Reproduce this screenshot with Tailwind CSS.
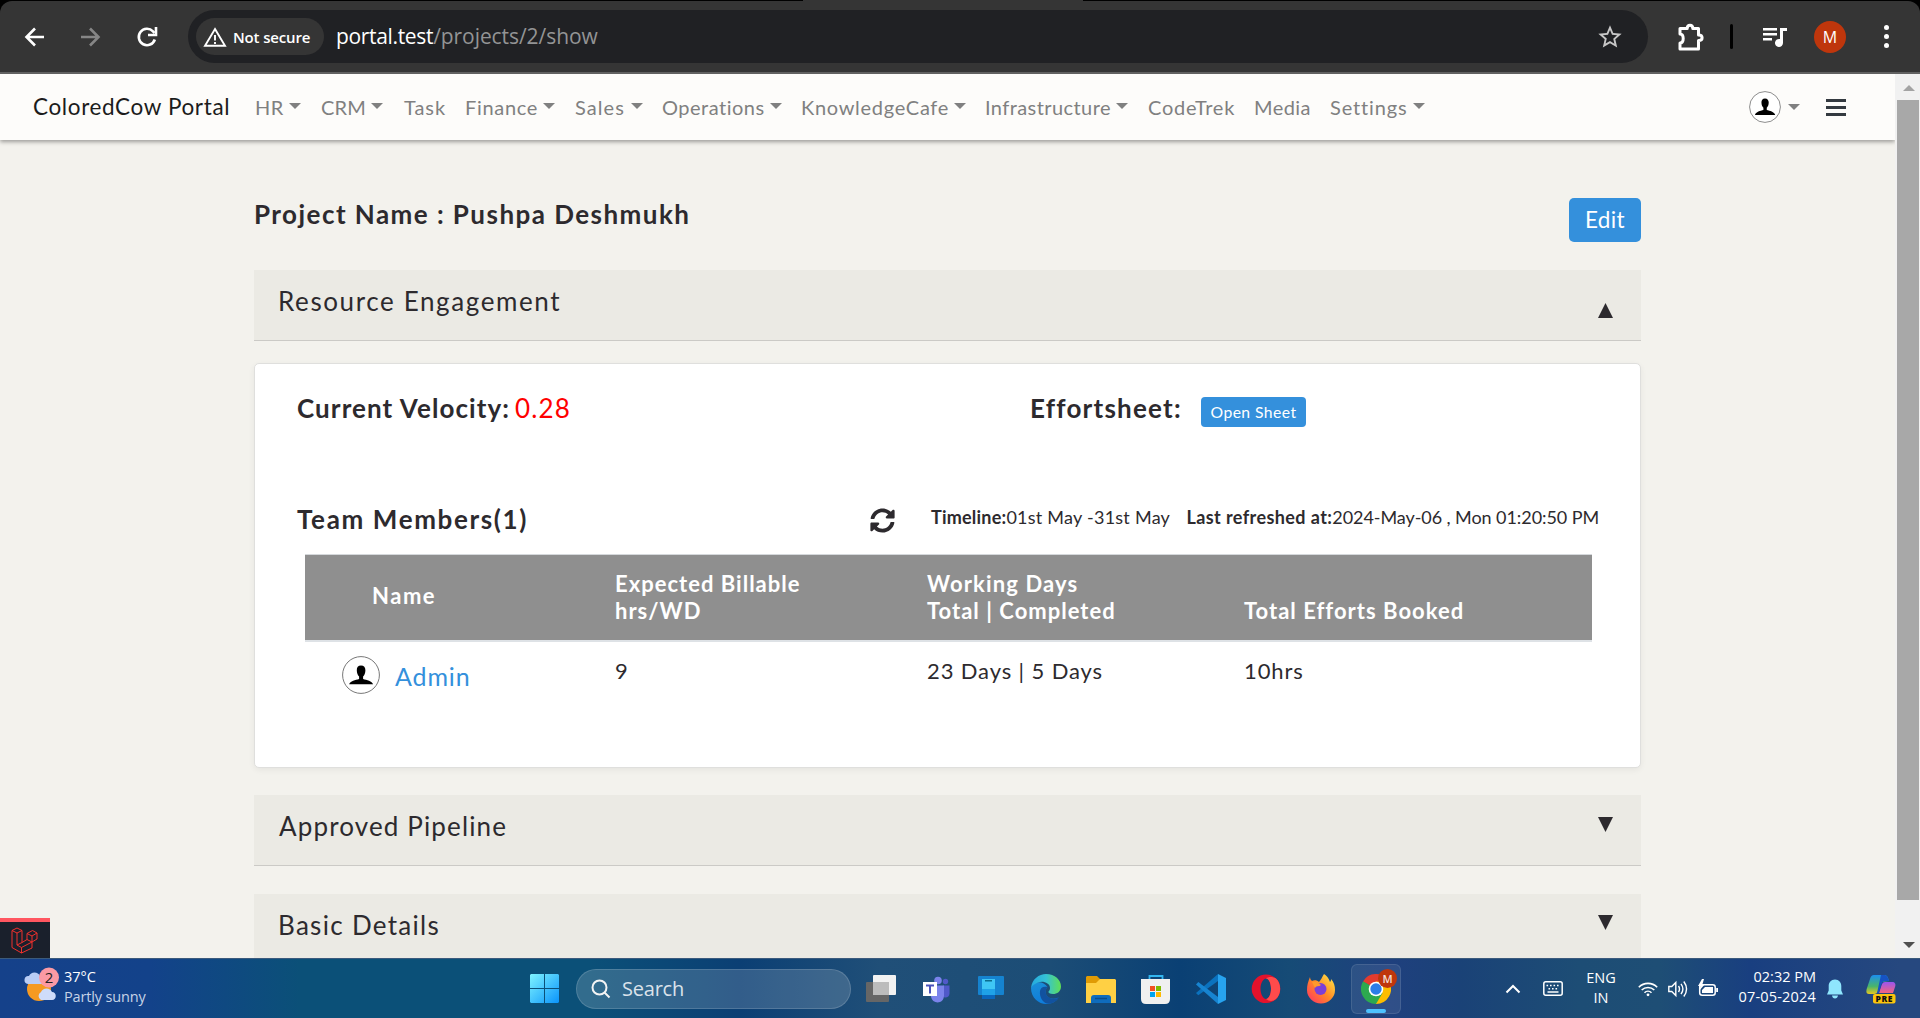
<!DOCTYPE html>
<html lang="en">
<head>
<meta charset="utf-8">
<title>ColoredCow Portal</title>
<script src="https://cdn.jsdelivr.net/npm/@tailwindcss/browser@4"></script>
</head>
<body class="w-[1920px] h-[1018px] overflow-hidden bg-black font-['Lato',sans-serif] text-[#2d2a2e]">
<div class="w-[1920px] h-[1018px] flex flex-col overflow-hidden relative">

<!-- Browser toolbar -->
<header class="h-[74px] shrink-0 flex flex-col font-['Open_Sans',sans-serif]">
  <div class="h-px flex justify-center pr-[34px] bg-black"><div class="w-[280px] bg-[#353535]"></div></div>
  <div class="h-[71px] bg-[#353535] rounded-t-[12px] flex items-center pl-[24px]">
    <svg class="w-[22px] h-[22px]" viewBox="0 0 22 22" fill="none" stroke="#fff" stroke-width="2.6"><path d="M20 11H3M11 2.5L2.5 11l8.500 8.500"/></svg>
    <svg class="ml-[34px] w-[22px] h-[22px]" viewBox="0 0 22 22" fill="none" stroke="#868686" stroke-width="2.600"><path d="M1 11h17M10 2.500l8.500 8.500-8.500 8.500"/></svg>
    <svg class="ml-[34px] w-[22px] h-[22px]" viewBox="0 0 22 22" fill="none" stroke="#fff" stroke-width="2.600"><path d="M18.800 13.500A8.200 8.200 0 1 1 17 5.400L18.500 7"/><path d="M20 1v8h-8" /></svg>
    <div class="ml-[30px] w-[1460px] h-[53px] rounded-full bg-[#202124] flex items-center pl-[8px]">
      <div class="w-[128px] h-[37px] rounded-full bg-[#353535] flex items-center pl-[7px] text-white">
        <svg class="w-[24px] h-[20px]" viewBox="0 0 24 20" fill="none" stroke="#fff" stroke-width="1.900"><path d="M12 2L22 18.800H2z"/><path d="M12 8v5.500M12 15v2"/></svg>
        <span class="ml-[6px] text-[15px] font-semibold leading-[20px] tracking-[-0.01em] whitespace-nowrap">Not secure</span>
      </div>
      <div class="ml-[12px] -mt-[2px] flex text-[21px] leading-[30px] whitespace-nowrap"><span class="text-white tracking-[-0.016em]">portal.test</span><span class="text-[#939495] tracking-[-0.003em]">/projects/2/show</span></div>
      <svg class="ml-auto mr-[24px] w-[28px] h-[28px]" viewBox="0 0 24 24" fill="#c7c7c7"><path d="M22 9.240l-7.190-.62L12 2 9.190 8.630 2 9.240l5.460 4.730L5.820 21 12 17.270 18.180 21l-1.630-7.030L22 9.240zM12 15.400l-3.760 2.270 1-4.280-3.320-2.880 4.380-.38L12 6.100l1.710 4.040 4.380.38-3.320 2.880 1 4.280L12 15.400z"/></svg>
    </div>
    <svg class="ml-[28px] w-[30px] h-[30px]" viewBox="0 0 30 30"><path d="M4 6.500h7.200c0-2 1-3.300 2.800-3.300s2.800 1.300 2.800 3.300h5.700v6.400c2.200 0 3.600 1 3.600 2.800s-1.400 2.800-3.600 2.800V27H4v-6c2 0 3.200-1.600 3.200-4.500S6 12 4 12z" fill="none" stroke="#fff" stroke-width="3" stroke-linejoin="round"/></svg>
    <div class="ml-[24px] w-[3px] h-[25px] rounded bg-black"></div>
    <svg class="ml-[29px] w-[26px] h-[22px]" viewBox="0 0 26 22" fill="#fff"><path d="M1 2h14v2.600H1zM1 7h14v2.600H1zM1 12h9v2.600H1zM18 2h7v3h-4v12a4 4 0 1 1-3-3.900z"/></svg>
    <div class="ml-[26px] w-[32px] h-[32px] rounded-full bg-[#bf360c] flex items-center justify-center text-white text-[16px]">M</div>
    <div class="ml-[38px] flex flex-col gap-[4px]"><i class="w-[5px] h-[5px] rounded-full bg-white"></i><i class="w-[5px] h-[5px] rounded-full bg-white"></i><i class="w-[5px] h-[5px] rounded-full bg-white"></i></div>
  </div>
  <div class="h-[2px] bg-[#616161]"></div>
</header>

<div class="h-[884px] shrink-0 flex overflow-hidden">
  <!-- Page -->
  <div class="w-[1895px] h-full bg-[#f3f2ed] flex flex-col overflow-hidden">
    <nav class="h-[66px] shrink-0 bg-[#fdfcfa] shadow-[0_2px_4px_rgba(0,0,0,0.35)] flex items-center whitespace-nowrap text-[20px] leading-[30px] text-[#808080]">
      <div class="pl-[33px] w-[255px] text-[22.500px] text-[#1c1c1c] tracking-[0.028em]">ColoredCow Portal</div>
      <div class="w-[66px] flex items-center"><span class="tracking-[0.03em]">HR</span><i class="ml-[5px] mb-[3px] border-x-6 border-x-transparent border-t-6 border-t-[#808080]"></i></div>
      <div class="w-[83px] flex items-center"><span class="tracking-[0.009em]">CRM</span><i class="ml-[5px] mb-[3px] border-x-6 border-x-transparent border-t-6 border-t-[#808080]"></i></div>
      <div class="w-[61px] tracking-[0.046em]">Task</div>
      <div class="w-[110px] flex items-center"><span class="tracking-[0.034em]">Finance</span><i class="ml-[5px] mb-[3px] border-x-6 border-x-transparent border-t-6 border-t-[#808080]"></i></div>
      <div class="w-[87px] flex items-center"><span class="tracking-[0.054em]">Sales</span><i class="ml-[6px] mb-[3px] border-x-6 border-x-transparent border-t-6 border-t-[#808080]"></i></div>
      <div class="w-[139px] flex items-center"><span class="tracking-[0.025em]">Operations</span><i class="ml-[5px] mb-[3px] border-x-6 border-x-transparent border-t-6 border-t-[#808080]"></i></div>
      <div class="w-[184px] flex items-center"><span class="tracking-[0.035em]">KnowledgeCafe</span><i class="ml-[5px] mb-[3px] border-x-6 border-x-transparent border-t-6 border-t-[#808080]"></i></div>
      <div class="w-[163px] flex items-center"><span class="tracking-[0.021em]">Infrastructure</span><i class="ml-[5px] mb-[3px] border-x-6 border-x-transparent border-t-6 border-t-[#808080]"></i></div>
      <div class="w-[106px] tracking-[0.037em]">CodeTrek</div>
      <div class="w-[76px] tracking-[0.022em]">Media</div>
      <div class="w-[100px] flex items-center"><span class="tracking-[0.043em]">Settings</span><i class="ml-[5px] mb-[3px] border-x-6 border-x-transparent border-t-6 border-t-[#808080]"></i></div>
      <svg class="ml-auto w-[32px] h-[32px]" viewBox="0 0 38 38"><circle cx="19" cy="19" r="18.300" fill="#fff" stroke="#777" stroke-width="1"/><path d="M19 9c-3 0-4.300 2-4.200 4.700 0 3 1 5 2.300 6.300v2.600c-3.500 1-9 2.200-10 5.800h24c-1-3.600-6.500-4.800-10-5.800V20c1.300-1.300 2.300-3.300 2.300-6.300C23.400 11 22 9 19 9z" fill="#000"/></svg>
      <i class="ml-[7px] border-x-6 border-x-transparent border-t-6 border-t-[#808080]"></i>
      <div class="ml-[26px] mr-[49px] flex flex-col gap-[4px]"><i class="w-[20px] h-[3px] bg-[#343a40]"></i><i class="w-[20px] h-[3px] bg-[#343a40]"></i><i class="w-[20px] h-[3px] bg-[#343a40]"></i></div>
    </nav>

    <main class="ml-[254px] w-[1387px] flex flex-col whitespace-nowrap">
      <div class="h-[130px] shrink-0 flex items-start justify-between pt-[58px]">
        <h4 class="text-[26px] leading-[32px] font-bold tracking-[0.056em]">Project Name : Pushpa Deshmukh</h4>
        <button class="w-[72px] h-[44px] rounded-[5px] bg-[#3490dc] text-white text-[22.500px] leading-[30px] tracking-[0.016em]">Edit</button>
      </div>

      <section class="h-[71px] shrink-0 bg-[#ebeae4] border-b border-[#cbcac6] flex items-start justify-between pl-[24px] pr-[28px]">
        <h5 class="pt-[15px] text-[26px] leading-[32px] tracking-[0.062em]">Resource Engagement</h5>
        <svg class="mt-[33px] w-[15px] h-[15px]" viewBox="0 0 15 15" fill="#2d2a2e"><path d="M7.500 0L15 15H0z"/></svg>
      </section>

      <section class="mt-[22px] h-[405px] shrink-0 bg-white border border-[#dfdfdd] rounded-[5px] shadow-[0_2px_6px_rgba(0,0,0,0.06)] flex flex-col">
        <div class="h-[139px] pt-[28px] pl-[42px] flex items-start text-[26px] leading-[32px]">
          <div class="w-[733px] flex"><b class="w-[218px] tracking-[0.042em]">Current Velocity:</b><span class="text-[#ff0000] tracking-[0.044em]">0.28</span></div>
          <b class="w-[171px] tracking-[0.047em]">Effortsheet:</b>
          <button class="mt-[5px] w-[105px] h-[30px] rounded-[4px] bg-[#3490dc] text-white text-[15.750px] leading-[24px] tracking-[0.026em]">Open Sheet</button>
        </div>
        <div class="h-[51px] pl-[42px] flex items-start">
          <h4 class="w-[573px] shrink-0 text-[26px] leading-[32px] font-bold tracking-[0.063em]">Team Members(1)</h4>
          <svg class="mt-[5px] w-[25px] h-[25px] shrink-0" viewBox="0 0 512 512" fill="#2d2a2e"><path d="M370.720 133.280C339.458 104.008 298.888 87.962 255.848 88c-77.458.068-144.328 53.178-162.791 126.850-1.344 5.363-6.122 9.150-11.651 9.150H24.103c-7.498 0-13.194-6.807-11.807-14.176C33.933 94.924 134.813 8 256 8c66.448 0 126.791 26.136 171.315 68.685L463.030 40.970C478.149 25.851 504 36.559 504 57.941V192c0 13.255-10.745 24-24 24H345.941c-21.382 0-32.090-25.851-16.971-40.971l41.750-41.749zM32 296h134.059c21.382 0 32.090 25.851 16.971 40.971l-41.750 41.750c31.262 29.273 71.835 45.319 114.876 45.280 77.418-.070 144.315-53.144 162.787-126.849 1.344-5.363 6.122-9.150 11.651-9.150h57.304c7.498 0 13.194 6.807 11.807 14.176C478.067 417.076 377.187 504 256 504c-66.448 0-126.791-26.136-171.315-68.685L48.970 471.030C33.851 486.149 8 475.441 8 454.059V320c0-13.255 10.745-24 24-24z"/></svg>
          <p class="ml-[36px] mt-[3px] flex shrink-0 text-[18px] leading-[22px]"><b class="tracking-[0.012em]">Timeline:</b><span class="w-[180px] tracking-[0.014em]">01st May -31st May</span><b class="tracking-[0.023em]">Last refreshed at:</b><span class="tracking-[-0.004em]">2024-May-06 , Mon 01:20:50 PM</span></p>
        </div>
        <div class="ml-[50px] w-[1287px] h-[88px] bg-[#8f8f8f] border-t border-b-2 border-t-[#d5d8db] border-b-[#dee2e6] pt-[15px] grid grid-cols-[310px_312px_317px_348px] text-white font-bold text-[22px] leading-[27px] tracking-[0.046em]">
          <div class="pl-[67px] pt-[12px] tracking-[0.07em]">Name</div>
          <div>Expected Billable<br>hrs/WD</div>
          <div><span class="tracking-[0.052em]">Working Days</span><br>Total | Completed</div>
          <div class="pt-[27px]">Total Efforts Booked</div>
        </div>
        <div class="ml-[50px] w-[1287px] grid grid-cols-[310px_312px_317px_348px] text-[22px] leading-[27px] tracking-[0.04em]">
          <div class="pl-[37px] pt-[14px] flex">
            <svg class="w-[38px] h-[38px]" viewBox="0 0 38 38"><circle cx="19" cy="19" r="18.400" fill="#fff" stroke="#777" stroke-width="1"/><path d="M19 9.500c-3 0-4.300 2-4.200 4.700 0 3 1 5 2.300 6.300v2.400c-3.500 1-9 2-10 5.300h24c-1-3.300-6.500-4.300-10-5.300v-2.400c1.300-1.300 2.300-3.300 2.300-6.300 0-2.700-1.400-4.700-4.400-4.700z" fill="#000"/></svg>
            <a class="ml-[15px] mt-[5px] text-[25px] leading-[30px] text-[#3490dc]">Admin</a>
          </div>
          <div class="pt-[15px]">9</div>
          <div class="pt-[15px]">23 Days | 5 Days</div>
          <div class="pt-[15px]">10hrs</div>
        </div>
      </section>

      <section class="mt-[27px] h-[71px] shrink-0 bg-[#ebeae4] border-b border-[#cbcac6] flex items-start justify-between pl-[25px] pr-[28px]">
        <h5 class="pt-[15px] text-[26px] leading-[32px] tracking-[0.044em]">Approved Pipeline</h5>
        <svg class="mt-[22px] w-[15px] h-[15px]" viewBox="0 0 15 15" fill="#2d2a2e"><path d="M7.500 15L15 0H0z"/></svg>
      </section>
      <section class="mt-[28px] h-[71px] shrink-0 bg-[#ebeae4] border-b border-[#cbcac6] flex items-start justify-between pl-[24px] pr-[28px]">
        <h5 class="pt-[15px] text-[26px] leading-[32px] tracking-[0.05em]">Basic Details</h5>
        <svg class="mt-[21px] w-[15px] h-[15px]" viewBox="0 0 15 15" fill="#2d2a2e"><path d="M7.500 15L15 0H0z"/></svg>
      </section>
    </main>
  </div>
  <!-- Scrollbar -->
  <div class="w-[25px] bg-[#f1f1f1] flex flex-col items-center">
    <i class="mt-[11px] ml-[2px] border-x-6 border-x-transparent border-b-6 border-b-[#a3a3a3]"></i>
    <div class="mt-[9px] w-[22px] h-[800px] bg-[#a8a8a8]"></div>
    <i class="mt-[42px] ml-[2px] border-x-6 border-x-transparent border-t-6 border-t-[#505050]"></i>
  </div>
</div>

<!-- Debug bar badge -->
<div class="absolute left-0 top-[918px] w-[50px] h-[40px] bg-[#1a202c] border-t-4 border-[#ff5660] flex justify-center pt-[5px] pr-[2px]">
  <svg class="w-[27px] h-[27px]" viewBox="0 0 27 27" fill="none" stroke="#f0302c" stroke-width="1" stroke-linejoin="round"><path d="M1 3.500L6 1l5 2.500v12l5-3V6.500L21.500 3.500 26 6v6l-5 3v6l-10.500 5L1 20.500zM1 3.500l5 2.500 5-2.500M6 6v12l4.500 2.500V26M6 18l5-2.500M10.500 20.500L21 15l-5-2.500M16 6.500l5 2.500 5-3M21 9v6"/></svg>
</div>

<!-- Taskbar -->
<footer class="h-[60px] shrink-0 border-t border-[#3b5a7c] bg-[linear-gradient(90deg,#15418a_0px,#13428a_150px,#0b5078_300px,#0b5078_590px,#0b3f74_740px,#204f78_880px,#1c4d76_1050px,#0a4074_1180px,#164b76_1290px,#1f407e_1390px,#1a4277_1460px,#1d4d75_1580px,#1e4e75_1660px,#193f80_1750px,#26487f_1900px)] flex items-center text-white whitespace-nowrap font-['Open_Sans',sans-serif]">
  <svg class="ml-[24px] w-[36px] h-[36px] mb-[8px] shrink-0" viewBox="0 0 36 36"><circle cx="15" cy="22" r="12" fill="#f59a22"/><path d="M4 17a4 4 0 0 1 1-8 6 6 0 0 1 11 0l3 8z" fill="#b9cdf5"/><path d="M17 33a4.500 4.500 0 0 1 0-8 6 6 0 0 1 11 0c5 0 5 8 0 8z" fill="#cfdcfa"/><circle cx="25" cy="10.500" r="10" fill="#fb9aa4"/><text x="25" y="16" text-anchor="middle" font-size="15" fill="#222">2</text></svg>
  <div class="ml-[4px] mb-[3px] w-[466px] shrink-0 text-[14.500px] leading-[20px]"><div>37°C</div><div class="text-[#c6d3e6] tracking-[-0.01em]">Partly sunny</div></div>
  <svg class="w-[29px] h-[29px] shrink-0" viewBox="0 0 29 29"><defs><linearGradient id="win" x2="1" y2="1"><stop stop-color="#7ff4ff"/><stop offset="1" stop-color="#0a94fb"/></linearGradient></defs><path d="M1 0h13v14H0V1zM15 0h13l1 1v13H15zM0 15h14v14H1l-1-1zM15 15h14v13l-1 1H15z" fill="url(#win)"/></svg>
  <div class="ml-[17px] w-[275px] h-[40px] shrink-0 rounded-full bg-white/16 border border-white/15 flex items-center pl-[14px]">
    <svg class="w-[20px] h-[20px]" viewBox="0 0 20 20" fill="none" stroke="#f4f4f4" stroke-width="2"><circle cx="8.500" cy="8.500" r="7"/><path d="M13.500 13.500L18.500 18.500"/></svg>
    <span class="ml-[11px] text-[20px] leading-[26px] tracking-[-0.011em] text-[#dbe2ea]">Search</span>
  </div>
  <div class="ml-[15px] flex shrink-0 gap-[25px] items-center">
    <svg class="w-[30px] h-[30px]" viewBox="0 0 30 30"><rect x="0" y="8" width="23" height="20" rx="1" fill="#666"/><rect x="7" y="1" width="23" height="20" rx="1" fill="#f2f2f2"/><path d="M7 8h16v13H7z" fill="#bcbcbc"/></svg>
    <svg class="w-[30px] h-[30px]" viewBox="0 0 30 30"><circle cx="17" cy="6.500" r="3.800" fill="#7b83eb"/><circle cx="24.500" cy="7.500" r="2.700" fill="#5059c9"/><path d="M22 11.500h6.500v8c0 5-6.500 5-6.500 2z" fill="#5059c9"/><path d="M9 11.500h14v10c0 9-12 9-13 1z" fill="#7b83eb"/><rect x="2" y="8" width="14" height="14" fill="#fff"/><path d="M5 10.500h8v2h-3v7H8v-7H5z" fill="#4b53bc"/></svg>
    <svg class="w-[30px] h-[30px]" viewBox="0 0 30 30"><rect x="2" y="2" width="26" height="19" rx="1" fill="#1583d0"/><path d="M6 5h13v20H6z" fill="#1fa2e8"/><path d="M6 5h13v10H6z" fill="#3fc6f5"/><path d="M6 21h13v4H6z" fill="#0a66bd"/><path d="M9 6h7v1.500H9z" fill="#0b6d8f"/></svg>
    <svg class="w-[30px] h-[30px]" viewBox="0 0 30 30"><defs><linearGradient id="ed" x2="1"><stop stop-color="#25a9e0"/><stop offset=".5" stop-color="#35c1d6"/><stop offset="1" stop-color="#5fdf55"/></linearGradient><linearGradient id="eb" y2="1" x2=".3"><stop stop-color="#1b8fd8"/><stop offset="1" stop-color="#0f7ddb"/></linearGradient></defs><path d="M0 14C0 24 8 30 15 30c6 0 10-2.500 12.500-6.500-7 3-13 0-13-6 0-2 1-3.500 2-4.500C12 6 2 7 0 14z" fill="url(#eb)"/><path d="M9 17c-1 7 4 13 9 12.700 5-.5 8-3 9.700-6.200-6 3-13 0-13-5.500 0-2.500 1-4 2-5C13 12 9.500 13 9 17z" fill="#12529f"/><path d="M0 14C1 5 8 0 15 0c9 0 15 6 15 12.500 0 5-4 7.500-8 7.500-3 0-5-1-4.500-2.500 1-1 1.500-2 1.500-3.500C19 9 12 6.500 7 8.500 4 9.500 1 11.500 0 14z" fill="url(#ed)"/></svg>
    <svg class="w-[30px] h-[30px]" viewBox="0 0 30 30"><path d="M0 3l1-1h10l3 3v5H0z" fill="#e09b05"/><path d="M0 9h10l4-4h15l1 1v23H0z" fill="#ffd044"/><path d="M5 29v-5q0-3 3-3h14q3 0 3 3v5z" fill="#0f6cbd"/><path d="M9 24.500h12" stroke="#0a4d8c" stroke-width="1.500"/></svg>
    <svg class="w-[30px] h-[30px]" viewBox="0 0 30 30"><path d="M8.500 6V2h13v4" fill="none" stroke="#32b6f0" stroke-width="1.800"/><path d="M0 5h29v20q0 5-5 5H5q-5 0-5-5z" fill="#f0f0f0"/><path d="M9 12h5v5H9z" fill="#f25022"/><path d="M15 12h5v5h-5z" fill="#7fba00"/><path d="M9 18h5v5H9z" fill="#00a4ef"/><path d="M15 18h5v5h-5z" fill="#ffb900"/></svg>
    <svg class="w-[30px] h-[30px]" viewBox="0 0 30 30"><path d="M0 19l2.300 2.300L22 7V0z" fill="#0b72be"/><path d="M0 10.500L2.300 8 22 23v7z" fill="#1784d1"/><path d="M22 0l8 4v22l-8 4z" fill="#27a3ef"/></svg>
    <svg class="w-[30px] h-[30px]" viewBox="0 0 30 30"><path fill-rule="evenodd" d="M15 .5a14.200 14.200 0 1 0 0 28.600 14.200 14.200 0 0 0 0-28.600zM15 4.500c3 0 5 5 5 10.300S18 25 15 25s-5.500-5-5.500-10.200S12 4.500 15 4.500z" fill="#e3122c"/><path d="M15 25c3 0 5-5 5-10.200S18 4.500 15 4.500c2-2 7-2 10 0 5.500 5 5.500 15.500 0 20.500-3 2.500-7 2.500-10 0z" fill="#ff4b4b"/></svg>
    <svg class="w-[30px] h-[30px]" viewBox="0 0 30 30"><defs><linearGradient id="ff" x1="1" x2="0" y2="1"><stop stop-color="#fff04a"/><stop offset=".5" stop-color="#ff8a25"/><stop offset="1" stop-color="#ff2a6a"/></linearGradient></defs><path d="M18 0c4 3 5 5 6 8 1-1 1-2 1-3 3 3 4 7 4 11a14 13.500 0 0 1-28 0C1 11 2 8 4 3c0 2 1 3 2 4 2-1 5-1 7 1 2-2 3-5 5-8z" fill="url(#ff)"/><circle cx="14.500" cy="15" r="6" fill="#7b3fd8"/><path d="M6 8c4-1 7 1 9 3-2 2-4 0-6 3z" fill="#ff9a2b"/></svg>
    <div class="-mx-[10px] relative w-[50px] h-[50px] rounded-[6px] bg-white/8 border border-white/10">
      <svg class="absolute left-[9px] top-[9px] w-[30px] h-[30px]" viewBox="0 0 30 30"><path d="M15 15L2 7.500A15 15 0 0 1 28 7.500z" fill="#e33b2e"/><path d="M15 15L15 30A15 15 0 0 1 2 7.500z" fill="#2da94f"/><path d="M15 15L28 7.500A15 15 0 0 1 15 30z" fill="#fdbd00"/><path d="M15 7.500h13L21.500 19 15 30z" fill="#fdbd00"/><path d="M2 7.500L8.500 19 15 30 21.500 19z" fill="#2da94f"/><circle cx="15" cy="15" r="7.300" fill="#fff"/><circle cx="15" cy="15" r="5.700" fill="#2b7de9"/></svg>
      <div class="absolute left-[26px] top-[4px] w-[19px] h-[19px] rounded-full bg-[#bf360c] text-[11px] font-semibold leading-[19px] text-center text-[#f3ddd6]">M</div>
      <div class="absolute left-[14px] bottom-[0px] w-[20px] h-[4px] rounded-full bg-[#4cc2ff]"></div>
    </div>
  </div>
  <svg class="ml-[114px] w-[16px] h-[10px]" viewBox="0 0 16 10" fill="none" stroke="#fff" stroke-width="2"><path d="M1.500 8.500L8 2l6.500 6.500"/></svg>
  <svg class="ml-[22px] w-[20px] h-[15px]" viewBox="0 0 20 15" fill="none" stroke="#fff" stroke-width="1.500"><rect x=".8" y=".8" width="18.400" height="13.400" rx="2"/><path d="M3.500 4.500h13M5.500 7.700h10" stroke-dasharray="1.600 1.900"/><path d="M4.500 11h11"/></svg>
  <div class="ml-[22px] mb-[1px] w-[32px] text-center text-[14.500px] leading-[20px]"><div>ENG</div><div>IN</div></div>
  <svg class="ml-[21px] w-[20px] h-[16px]" viewBox="0 0 20 16" fill="none" stroke="#fff" stroke-width="1.600"><path d="M.8 6.200a13 13 0 0 1 18.400 0M3.700 9a9 9 0 0 1 12.600 0M6.500 11.700a5 5 0 0 1 7 0"/><circle cx="10" cy="13.800" r="1.400" fill="#fff" stroke="none"/></svg>
  <svg class="ml-[10px] w-[20px] h-[18px]" viewBox="0 0 20 18" fill="none" stroke="#fff" stroke-width="1.400"><path d="M.8 6.500h3l4-4v13l-4-4h-3zM10.500 6q2 3 0 6M13 3.800q3.800 5.200 0 10.400M15.800 1.500q5.500 7.500 0 15"/></svg>
  <svg class="ml-[10px] w-[20px] h-[18px] mb-[2px]" viewBox="0 0 20 18"><rect x="1.700" y="5.700" width="15.500" height="10.600" rx="2.500" fill="none" stroke="#fff" stroke-width="1.500"/><path d="M7 8h8v6H4v-3zM18.200 9h1.800v4h-1.800z" fill="#fff"/><path d="M4 0L0 7h2.500L1 12l6-7H4.500L6 0z" fill="#fff"/></svg>
  <div class="ml-[16px] mb-[3px] w-[82px] text-right text-[14.500px] leading-[20px]"><div>02:32 PM</div><div class="tracking-[0.013em]">07-05-2024</div></div>
  <svg class="ml-[10px] w-[18px] h-[20px]" viewBox="0 0 18 20" fill="#8fe6fd"><path d="M9 .5c-4 0-6.300 3-6.300 6.500v4.500L1 15.500h16l-1.700-4V7C15.300 3.500 13 .5 9 .5zM6 16.500h6q-.5 3-3 3t-3-3z"/></svg>
  <svg class="ml-[22px] w-[30px] h-[30px]" viewBox="0 0 30 30"><defs><linearGradient id="ca" x2="0" y2="1"><stop stop-color="#1b8ef0"/><stop offset=".6" stop-color="#49b56a"/><stop offset="1" stop-color="#e8c91f"/></linearGradient><linearGradient id="cb" x2="0" y2="1"><stop stop-color="#9a55f0"/><stop offset="1" stop-color="#f4647e"/></linearGradient></defs><path d="M8 1h10c3 0 4 2 5 6l-8 1-3 9q-1 3-4 3H3c-3 0-3-3-2-6l3-9q1-4 4-4z" fill="url(#ca)"/><path d="M19 8h7c3 0 4 2 3 5l-2 6H13l3-9q1-2 3-2z" fill="url(#cb)"/><path d="M15 1h4q3 1 4 6h-5q-2 1-3 4l-2 8h-2z" fill="#1653c4"/><rect x="7" y="20" width="22.500" height="9.500" rx="2" fill="#fcc50c"/><text x="18.300" y="27.700" text-anchor="middle" font-size="8.500" font-weight="800" letter-spacing=".6" fill="#111">PRE</text></svg>
</footer>
</div>
</body>
</html>
